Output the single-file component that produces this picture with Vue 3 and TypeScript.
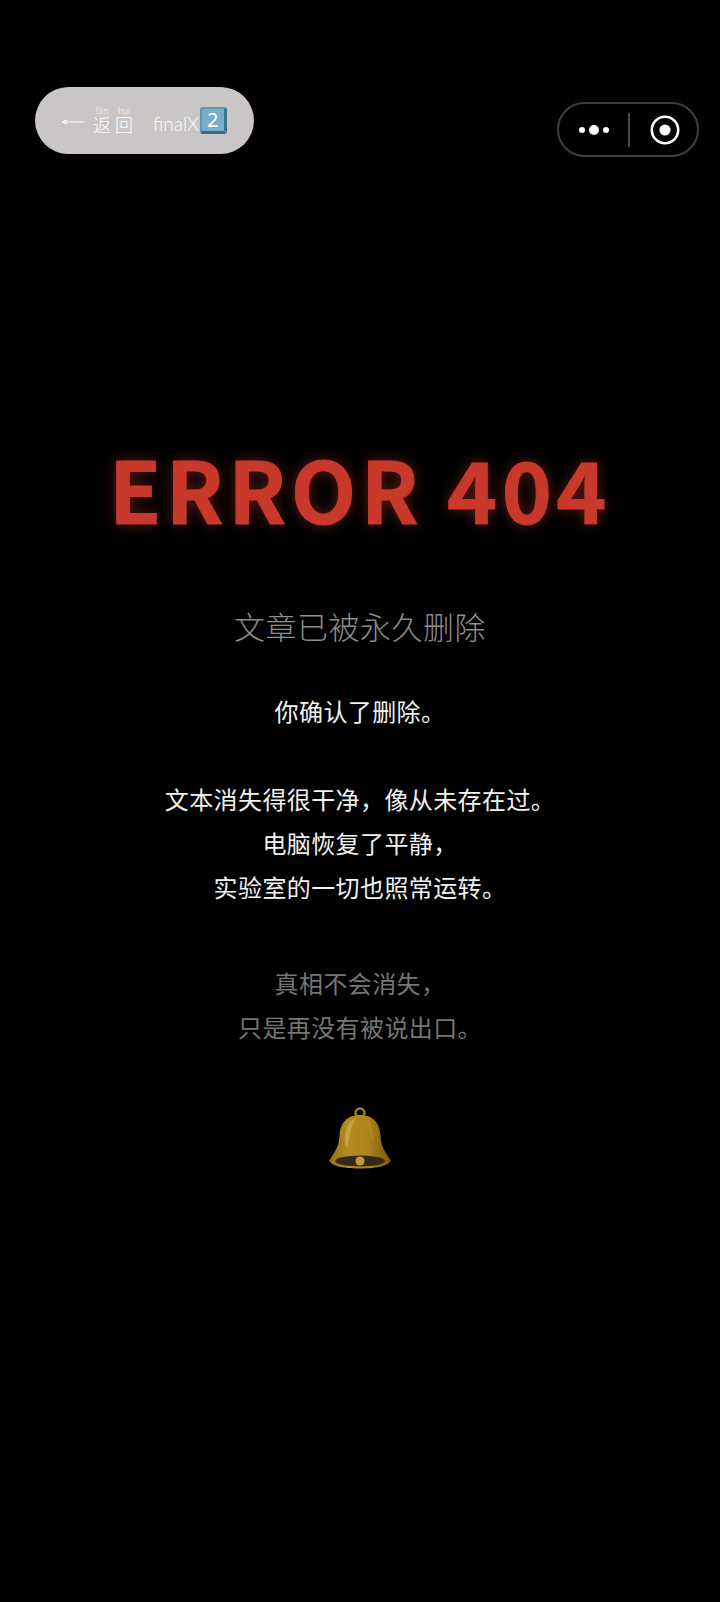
<script setup lang="ts">
const confirmLines = ['文本消失得很干净，像从未存在过。', '电脑恢复了平静，', '实验室的一切也照常运转。']
const truthLines = ['真相不会消失，', '只是再没有被说出口。']
</script>

<template>
  <div class="page">
    <header class="top-bar">
      <div class="back-pill">
        <svg class="arrow" width="24" height="10" viewBox="0 0 24 10">
          <path d="M1 5 L23 5 M1 5 L6 3 M1 5 L6 7" fill="none" stroke="#fff" stroke-width="1.1" stroke-linecap="round" />
        </svg>
        <span class="back-word">
          <span class="syllable"><small>fǎn</small>返</span>
          <span class="syllable"><small>huí</small>回</span>
        </span>
        <span class="back-name">finalX</span>
        <span class="keycap">2</span>
      </div>
      <div class="capsule">
        <svg class="dots" width="36" height="12" viewBox="0 0 36 12">
          <circle cx="6" cy="6" r="3" fill="#fff" />
          <circle cx="18" cy="6" r="5" fill="#fff" />
          <circle cx="30" cy="6" r="3" fill="#fff" />
        </svg>
        <i class="capsule-line"></i>
        <svg class="target" width="30" height="30" viewBox="0 0 30 30">
          <circle cx="15" cy="15" r="13.2" fill="none" stroke="#fff" stroke-width="2.6" />
          <circle cx="15" cy="15" r="5.6" fill="#fff" />
        </svg>
      </div>
    </header>

    <main class="content">
      <h1 class="title">ERROR 404</h1>
      <h2 class="subtitle">文章已被永久删除</h2>
      <p class="lead">你确认了删除。</p>
      <div class="block">
        <p v-for="line in confirmLines" :key="line">{{ line }}</p>
      </div>
      <div class="block muted">
        <p v-for="line in truthLines" :key="line">{{ line }}</p>
      </div>
      <svg class="bell" width="62" height="62" viewBox="0 0 62 62">
        <defs>
          <linearGradient id="bellBody" x1="0" y1="0" x2="1" y2="0">
            <stop offset="0" stop-color="#94700f" />
            <stop offset="0.3" stop-color="#b58c1e" />
            <stop offset="0.65" stop-color="#ab831b" />
            <stop offset="1" stop-color="#77570e" />
          </linearGradient>
        </defs>
        <circle cx="31" cy="6" r="4.5" fill="none" stroke="#a98118" stroke-width="2.4" />
        <path d="M31 8 C17 8 11 17 10.500 29 C10 39 6 45 0.500 53 C0 58 13 61.500 31 61.500 C49 61.500 62 58 61.500 53 C56 45 52 39 51.500 29 C51 17 45 8 31 8 Z" fill="url(#bellBody)" />
        <path d="M16 36 C15 23 19 15 27 11 C22 19 21 27 19 38 C17 41 16 39 16 36 Z" fill="#d8bb6a" opacity="0.5" />
        <path d="M37 12 C42 16 44 24 45 36 C41 28 40 19 37 12 Z" fill="#d2ad4a" opacity="0.25" />
        <ellipse cx="31" cy="54" rx="25" ry="5.500" fill="#33291a" />
        <circle cx="31" cy="54" r="4.500" fill="#c09a38" />
      </svg>
    </main>
  </div>
</template>

<style>
html,
body {
  margin: 0;
  background: #000;
}
</style>

<style scoped>
.page {
  height: 1602px;
  overflow: hidden;
  background: #000;
  color: #fff;
  font-family: "Noto Sans CJK SC", "Noto Sans", sans-serif;
}

.top-bar {
  display: flex;
  justify-content: space-between;
  align-items: flex-start;
  padding: 87px 21px 0 35px;
}

.back-pill {
  display: flex;
  align-items: center;
  width: 219px;
  height: 67px;
  box-sizing: border-box;
  padding-left: 26px;
  border-radius: 34px;
  background: #cac6c5;
  color: #fff;
}

.arrow {
  flex: none;
  margin-top: 2px;
}

.back-word {
  display: flex;
  gap: 4px;
  margin: -2px 0 0 8px;
  font-size: 18px;
  font-weight: 300;
  line-height: 18px;
}

.syllable {
  display: flex;
  flex-direction: column;
  align-items: center;
}

.syllable small {
  font-family: "Lato", sans-serif;
  font-size: 9px;
  line-height: 9px;
}

.back-name {
  margin: 6px 0 0 20px;
  font-family: "Lato", sans-serif;
  font-size: 19px;
  font-weight: 300;
}

.keycap {
  display: flex;
  align-items: center;
  justify-content: center;
  width: 27px;
  height: 27px;
  margin: 0 0 0 1px;
  box-sizing: border-box;
  border-radius: 3px;
  border-style: solid;
  border-width: 2px 3px 3px 2px;
  border-color: #5d96b3 #3f7390 #3a6a85 #5d96b3;
  background: #79aecb;
  color: #fff;
  font-family: "Noto Sans", sans-serif;
  font-size: 20px;
  line-height: 1;
}

.capsule {
  display: flex;
  align-items: center;
  width: 142px;
  height: 55px;
  margin-top: 15px;
  box-sizing: border-box;
  padding-left: 17px;
  border: 2px solid #3f3f3f;
  border-radius: 28px;
}

.capsule-line {
  width: 1.5px;
  height: 34px;
  margin-left: 16px;
  background: #4c4c4c;
}

.target {
  margin-left: 20px;
}

.content {
  display: flex;
  flex-direction: column;
  align-items: center;
  padding-top: 271px;
  text-align: center;
}

.title {
  margin: 0;
  color: #c8392c;
  font-size: 85px;
  font-weight: 700;
  line-height: 118px;
  letter-spacing: 4.500px;
  -webkit-text-stroke: 1px #c8392c;
  text-shadow: 0 0 14px rgba(200, 57, 44, 0.5);
}

.subtitle {
  margin: 57px 0 0;
  color: #8c8c8c;
  font-size: 31px;
  font-weight: 300;
  line-height: 46px;
  letter-spacing: 0.5px;
}

.lead,
.block p {
  margin: 0;
  font-size: 24px;
  line-height: 44px;
  letter-spacing: 0.4px;
}

.lead {
  margin-top: 40px;
  color: #f2f2f2;
}

.block {
  margin-top: 44px;
  color: #f2f2f2;
}

.block.muted {
  margin-top: 52px;
  color: #757575;
}

.bell {
  margin-top: 58px;
}
</style>
